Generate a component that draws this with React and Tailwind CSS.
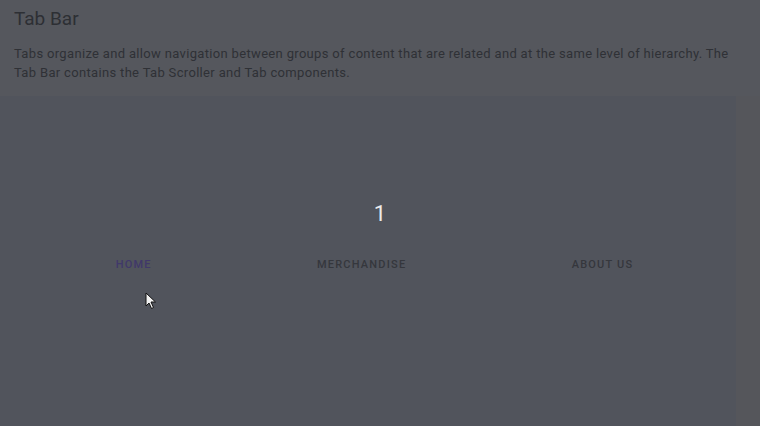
export default function App() {
  return (
    <div className="relative w-[760px] h-[426px] overflow-hidden bg-[#55575d]" style={{ fontFamily: 'Roboto, "Noto Sans", sans-serif' }}>
      <header className="h-[96px] pl-[14px] pr-[20px] pt-[7px]">
        <h1 className="text-[19px] leading-[24px] text-[#2d2f34]">Tab Bar</h1>
        <p className="mt-[13px] text-[13px] leading-[19px] tracking-[0.33px] text-[#2f3136]">
          Tabs organize and allow navigation between groups of content that are related and at the same level of hierarchy. The Tab Bar contains the Tab Scroller and Tab components.
        </p>
      </header>
      <div className="flex">
        <main className="w-[736px] h-[330px] bg-[#51545c] pt-[104px]">
          <div className="pl-[24px] text-center text-[22px] leading-[28px] text-[#ececec]">1</div>
          <nav className="mt-[27px] ml-[33px] w-[683px] flex">
            <div className="flex-auto text-center text-[11px] leading-[20px] font-medium tracking-[1.2px] text-[#40386a]">HOME</div>
            <div className="flex-auto text-center text-[11px] leading-[20px] font-medium tracking-[1.2px] text-[#35373d]">MERCHANDISE</div>
            <div className="flex-auto text-center text-[11px] leading-[20px] font-medium tracking-[1.2px] text-[#35373d]">ABOUT US</div>
          </nav>
        </main>
        <div className="flex-1 bg-[#55565b]" />
      </div>
      <svg className="absolute left-[145px] top-[292px]" width="12" height="18" viewBox="0 0 12 18">
        <path d="M1 1 L1 14 L4 11 L6.5 16.5 L8.5 15.5 L6 10 L10.5 10 Z" fill="#f2f2f2" stroke="#111" strokeWidth="1" strokeLinejoin="round" />
      </svg>
    </div>
  );
}
